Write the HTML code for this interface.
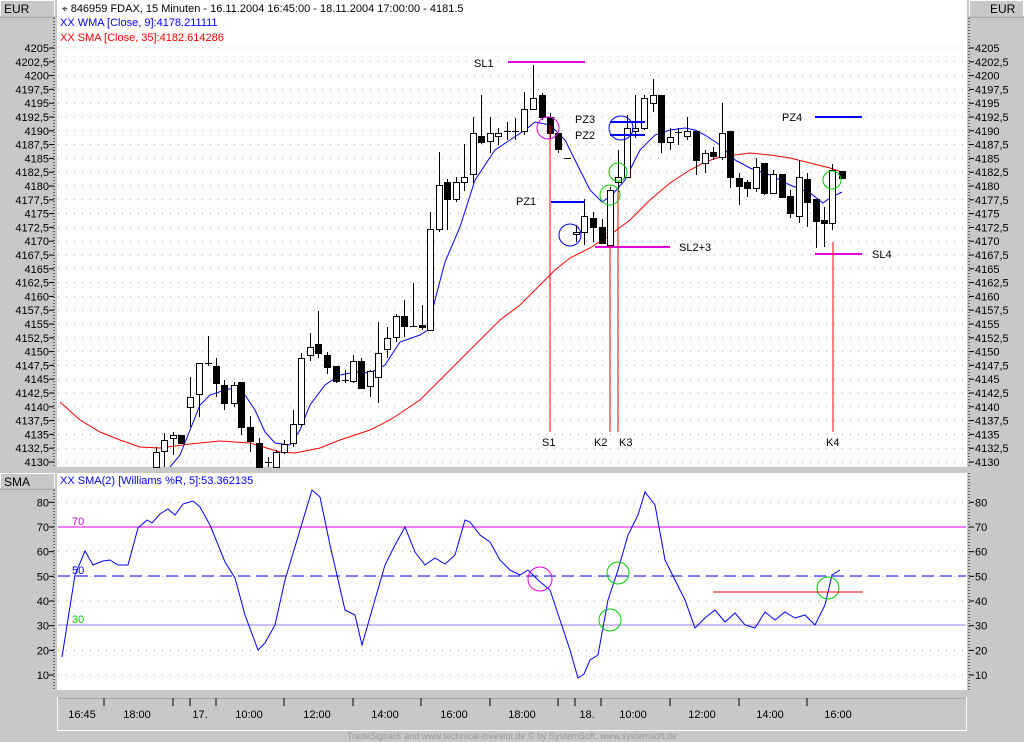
<!DOCTYPE html>
<html><head><meta charset="utf-8"><style>
html,body{margin:0;padding:0;background:#c8c8c8;width:1024px;height:742px;overflow:hidden}
svg{display:block;font-family:"Liberation Sans",sans-serif}
</style></head><body>
<svg id="s" width="1024" height="742" xmlns="http://www.w3.org/2000/svg">
<rect x="0" y="0" width="1024" height="742" fill="#c8c8c8"/>
<rect x="57" y="0" width="910" height="467" fill="#fff"/>
<rect x="57" y="473" width="910" height="217" fill="#fff"/>
<rect x="0.5" y="0.5" width="54" height="16" fill="#c8c8c8" stroke="#fff"/>
<line x1="0" y1="17" x2="55" y2="17" stroke="#888"/>
<text x="4" y="13" font-size="12">EUR</text>
<rect x="969.5" y="0.5" width="54" height="16" fill="#c8c8c8" stroke="#fff"/>
<line x1="969" y1="17" x2="1024" y2="17" stroke="#888"/>
<text x="990" y="13" font-size="12">EUR</text>
<rect x="0.5" y="473.5" width="54" height="15" fill="#c8c8c8" stroke="#fff"/>
<line x1="0" y1="489" x2="55" y2="489" stroke="#888"/>
<text x="4" y="486" font-size="12">SMA</text>
<g id="grid"></g>
<g font-size="11">
<text x="62" y="12" font-size="11"><tspan font-size="10">⌖</tspan> 846959  FDAX, 15 Minuten - 16.11.2004 16:45:00 - 18.11.2004 17:00:00 - 4181.5</text>
<text x="60" y="26" fill="#00f">XX WMA [Close, 9]:4178.211111</text>
<text x="60" y="41" fill="#f00">XX SMA [Close, 35]:4182.614286</text>
<text x="60" y="484" fill="#00f">XX SMA(2) [Williams %R, 5]:53.362135</text>
</g>
<g id="lines"></g>
<g id="cand"></g>
<g stroke-width="2">
<line x1="508" y1="62" x2="585" y2="62" stroke="#e000e0"/>
<line x1="551" y1="202" x2="585" y2="202" stroke="#00f"/>
<line x1="610" y1="122" x2="645" y2="122" stroke="#00f"/>
<line x1="610" y1="135" x2="645" y2="135" stroke="#00f"/>
<line x1="595" y1="247" x2="670" y2="247" stroke="#e000e0"/>
<line x1="815" y1="117" x2="862" y2="117" stroke="#00f"/>
<line x1="815" y1="254" x2="862" y2="254" stroke="#e000e0"/>
</g>
<g stroke="#f00" stroke-width="1">
<line x1="550" y1="125" x2="550" y2="432"/>
<line x1="610" y1="245" x2="610" y2="432"/>
<line x1="618" y1="190" x2="618" y2="432"/>
<line x1="833" y1="242" x2="833" y2="432"/>
</g>
<g fill="none" stroke-width="1">
<circle cx="548" cy="128" r="11" stroke="#e000e0"/>
<circle cx="570" cy="235" r="11" stroke="#00f"/>
<circle cx="621" cy="128" r="12" stroke="#00f"/>
<circle cx="618" cy="172" r="9" stroke="#0c0"/>
<circle cx="610" cy="195" r="10" stroke="#0c0"/>
<circle cx="832" cy="180" r="9" stroke="#0c0"/>
<circle cx="540" cy="579" r="12" stroke="#e000e0"/>
<circle cx="618" cy="573" r="11" stroke="#0c0"/>
<circle cx="610" cy="620" r="11" stroke="#0c0"/>
<circle cx="828" cy="588" r="11" stroke="#0c0"/>
</g>
<line x1="713" y1="592" x2="863" y2="592" stroke="#f00"/>
<g font-size="11">
<text x="474" y="67">SL1</text>
<text x="516" y="205">PZ1</text>
<text x="575" y="123">PZ3</text>
<text x="575" y="139">PZ2</text>
<text x="679" y="251">SL2+3</text>
<text x="782" y="121">PZ4</text>
<text x="872" y="258">SL4</text>
<text x="542" y="446">S1</text>
<text x="594" y="446">K2</text>
<text x="619" y="446">K3</text>
<text x="826" y="446">K4</text>
<text x="72" y="525" fill="#e000e0">70</text>
<text x="72" y="574" fill="#00f">50</text>
<text x="72" y="623" fill="#0c0">30</text>
</g>
<rect x="57.5" y="697.5" width="909" height="33" fill="#c8c8c8" stroke="#fff"/>
<line x1="58" y1="698" x2="966" y2="698" stroke="#888"/>
<g id="time" font-size="11"></g>
<text x="512" y="739" font-size="9" fill="#999" text-anchor="middle">TradeSignal® and www.technical-investor.de © by SystemSoft, www.systemsoft.de</text>
</svg>
<script>
var NS="http://www.w3.org/2000/svg";
function el(p,t,a,txt){var e=document.createElementNS(NS,t);for(var k in a)e.setAttribute(k,a[k]);if(txt!=null)e.textContent=txt;p.appendChild(e);return e;}
var g=document.getElementById('grid');
for(var i=0;i<=30;i++){var p=4205-i*2.5,y=48+i*13.8;var lab=(p%1?(Math.floor(p)+",5"):p)+"";
 el(g,'line',{x1:58,y1:y,x2:966,y2:y,stroke:'#aaa','stroke-dasharray':'1,7'});
 el(g,'text',{x:49,y:y+4,'font-size':11,'text-anchor':'end'},lab);
 el(g,'line',{x1:49,y1:y,x2:54,y2:y,stroke:'#000'});
 el(g,'text',{x:975,y:y+4,'font-size':11},lab);
 el(g,'line',{x1:969,y1:y,x2:974,y2:y,stroke:'#000'});}
el(g,'line',{x1:54,y1:18,x2:54,y2:467,stroke:'#000','stroke-dasharray':'1,2'});
el(g,'line',{x1:969,y1:18,x2:969,y2:467,stroke:'#000','stroke-dasharray':'1,2'});
el(g,'line',{x1:54,y1:490,x2:54,y2:690,stroke:'#000','stroke-dasharray':'1,2'});
el(g,'line',{x1:969,y1:473,x2:969,y2:690,stroke:'#000','stroke-dasharray':'1,2'});
for(var v=80;v>=10;v-=10){var y=527+(70-v)*2.467;
 el(g,'line',{x1:58,y1:y,x2:966,y2:y,stroke:'#aaa','stroke-dasharray':'1,7'});
 el(g,'text',{x:49,y:y+4,'font-size':11,'text-anchor':'end'},v);
 el(g,'line',{x1:49,y1:y,x2:54,y2:y,stroke:'#000'});
 el(g,'text',{x:975,y:y+4,'font-size':11},v);
 el(g,'line',{x1:969,y1:y,x2:974,y2:y,stroke:'#000'});}
el(g,'line',{x1:58,y1:527,x2:966,y2:527,stroke:'#e000e0'});
el(g,'line',{x1:58,y1:576,x2:966,y2:576,stroke:'#00f','stroke-dasharray':'12,6'});
el(g,'line',{x1:58,y1:625,x2:966,y2:625,stroke:'#a080ff'});
var L=document.getElementById('lines');
function pl(pts,c){el(L,'polyline',{points:pts,fill:'none',stroke:c,'stroke-width':1});}
pl("60,402 80,420 100,432 120,440 140,447 160,448 190,444 220,441 250,443 280,452 295,453 320,448 340,440 370,430 390,420 420,400 440,380 460,360 480,340 500,320 520,305 540,285 555,270 570,258 590,248 610,235 630,220 650,200 670,183 690,170 705,162 720,157 750,153 770,155 790,158 810,163 830,168 845,173","#f00");
pl("170,467 180,455 190,430 200,405 210,395 225,390 234,388 245,395 255,410 265,432 275,443 290,445 300,430 310,405 325,385 340,375 355,372 370,373 385,365 400,342 420,335 428,330 435,300 445,262 460,227 475,180 495,150 510,140 525,130 535,122 550,125 565,140 575,160 590,190 602,202 612,195 625,180 640,150 655,135 670,130 685,128 695,130 705,135 720,145 735,160 750,168 770,175 790,185 810,193 823,203 830,198 842,192","#00f");
pl("62,657 75,575 85,551 93,565 103,561 110,560 118,565 128,565 138,528 147,520 152,523 160,514 168,509 175,515 183,504 193,501 200,507 210,525 225,562 235,578 245,615 258,650 265,643 275,625 285,580 300,530 312,490 320,497 330,545 345,610 355,615 362,645 372,610 385,565 395,545 405,527 415,552 425,565 435,558 445,564 455,555 465,520 470,522 480,535 490,542 500,560 510,570 520,575 528,570 538,580 550,590 560,620 570,650 578,678 584,674 590,660 598,655 608,600 618,570 628,535 638,515 645,492 655,505 665,560 675,580 685,600 695,628 705,618 715,610 725,622 735,613 745,625 755,628 765,612 775,620 785,612 795,618 805,615 815,625 825,605 832,575 840,570","#00f");
var C=[[156,467,452,447,467],[164,451,440,433,467],[173,438,435,432,455],[181,435,443,435,443],[190,407,397,377,427],[199,394,363,363,417],[208,363,363,336,366],[216,366,383,358,397],[224,385,403,380,410],[234,403,385,382,407],[241,382,427,382,435],[250,427,441,416,452],[259,443,467,438,467],[268,462,462,457,467],[276,467,452,450,467],[284,452,444,440,454],[293,443,424,410,447],[301,424,358,353,427],[310,355,347,333,361],[318,344,353,311,358],[327,355,367,352,374],[336,366,381,366,383],[345,380,380,370,383],[353,381,361,355,383],[361,361,388,358,388],[370,386,371,370,397],[378,377,353,322,403],[387,349,338,327,358],[396,337,316,314,342],[404,316,326,300,337],[413,326,326,283,327],[422,325,327,305,330],[430,330,229,212,330],[439,229,185,152,232],[447,182,199,179,230],[456,199,182,177,202],[464,182,177,144,191],[473,174,133,117,183],[481,136,142,95,144],[490,141,133,117,153],[498,136,133,128,145],
[507,131,131,122,140],[515,131,131,118,140],[524,131,109,92,135],[533,109,98,65,110],[542,95,117,93,120],[550,117,133,113,138],[558,133,149,133,153],[567,158,158,158,158],[576,234,232,225,242],[584,232,216,199,245],[593,218,227,212,242],[602,227,243,219,244],[610,245,190,187,247],[618,182,177,150,192],[627,177,128,115,178],[635,131,128,95,138],[644,128,98,95,130],[653,103,95,79,112],[661,95,142,95,153],[670,142,137,128,150],[678,132,132,128,145],[687,136,131,117,140],[696,131,160,131,175],[705,163,153,150,173],[713,152,156,147,160],[722,157,133,103,160],[730,131,177,131,188],[739,178,186,173,205],[747,182,188,180,197],[756,188,167,158,192],[764,163,193,163,195],[773,193,174,170,193],[782,174,197,174,198],[790,196,213,190,218],[799,216,177,160,223],[807,179,202,173,227],[816,199,221,199,248],[824,220,223,207,247],[832,223,170,164,230],[842,171,178,171,178]];
var K=document.getElementById('cand');
C.forEach(function(c){var x=c[0],o=c[1],cl=c[2],top=Math.min(o,cl),bot=Math.max(o,cl);
 el(K,'line',{x1:x+.5,y1:Math.min(c[3],top),x2:x+.5,y2:Math.max(c[4],bot),stroke:'#000'});
 if(bot-top<1.5){el(K,'line',{x1:x-3,y1:top+.5,x2:x+4,y2:top+.5,stroke:'#000'});}
 else el(K,'rect',{x:x-2.5,y:top+.5,width:6,height:bot-top,fill:cl>o?'#000':'#fff',stroke:'#000'});});
var T=document.getElementById('time');
[104,173,190,216,284,353,421,490,558,575,601,670,739,807].forEach(function(x){el(T,'line',{x1:x,y1:698,x2:x,y2:706,stroke:'#000'});});
[[82,"16:45"],[137,"18:00"],[200,"17."],[249,"10:00"],[317,"12:00"],[385,"14:00"],[454,"16:00"],[522,"18:00"],[587,"18."],[633,"10:00"],[702,"12:00"],[770,"14:00"],[838,"16:00"]].forEach(function(t){el(T,'text',{x:t[0],y:718,'text-anchor':'middle'},t[1]);});
</script>
</body></html>
